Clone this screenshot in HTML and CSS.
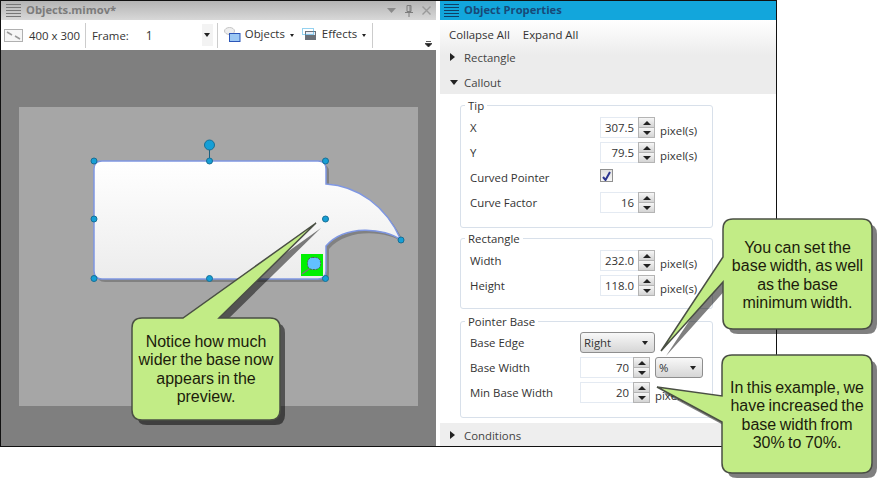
FILE: index.html
```html
<!DOCTYPE html>
<html lang="en">
<head>
    <meta charset="UTF-8">
    <meta name="viewport" content="width=device-width, initial-scale=1.0">
    <title>Object Properties</title>
    <link rel="stylesheet" href="styles.css">
</head>
<body>
    <div class="window">
        <div class="doc-panel">
            <div class="titlebar titlebar-doc">
                <svg class="grip" viewBox="0 0 15 13"><path d="M0 .5h15M0 3.5h15M0 6.500h15M0 9.500h15M0 12.500h15" stroke="#777" fill="none"/></svg>
                <span class="title-text">Objects.mimov*</span>
                <div class="title-btns">
                    <svg width="9" height="6" viewBox="0 0 9 6"><path d="M0 0h9L4.500 5z" fill="#8a8a8a"/></svg>
                    <svg width="8" height="12" viewBox="0 0 8 12"><path d="M2 .5h4v6H2zM0 7.500h8M4 8v4M5 1v5" stroke="#7c7c7c" fill="none"/></svg>
                    <svg width="9" height="9" viewBox="0 0 9 9"><path d="M.5.5l8 8M8.500.5l-8 8" stroke="#9a9a9a" stroke-width="1.400" fill="none"/></svg>
                </div>
            </div>
            <div class="toolbar">
                <svg class="tool-size" width="19" height="13" viewBox="0 0 19 13"><rect x=".5" y=".5" width="18" height="12" fill="#f6f6f6" stroke="#b0b0b0"/><path d="M3 3l5 3M11 7l5 3" stroke="#999" stroke-width="1.500"/></svg>
                <span class="tool-label size-label">400 x 300</span>
                <span class="sep"></span>
                <span class="tool-label frame-label">Frame:</span>
                <div class="frame-combo"><span>1</span><span class="combo-arrow"><i class="caret"></i></span></div>
                <span class="sep sep-b"></span>
                <svg class="tool-icon objects-icon" width="17" height="15" viewBox="0 0 17 15">
                    <ellipse cx="5.500" cy="4" rx="5" ry="3.500" fill="#eee" stroke="#c4c4c4"/>
                    <rect x="5.500" y="6.500" width="10.500" height="8" fill="#9cc8f4" stroke="#2c56b8"/>
                </svg>
                <span class="tool-label menu-label objects-label">Objects</span><i class="caret caret-tool"></i>
                <svg class="tool-icon effects-icon" width="14" height="12" viewBox="0 0 14 12">
                    <rect x="3" y="3" width="11" height="9" fill="#6b7078"/>
                    <rect x="4" y="4" width="9" height="3" fill="#e6edf8"/>
                    <rect x=".5" y=".5" width="11" height="6" fill="none" stroke="#2aa5e0" stroke-dasharray="1 1"/>
                </svg>
                <span class="tool-label menu-label effects-label">Effects</span><i class="caret caret-tool"></i>
                <span class="sep sep-c"></span>
                <svg class="overflow" width="7" height="6" viewBox="0 0 7 6"><path d="M1 .5h5M0 2.500h7L3.500 6z" stroke="#333" stroke-width=".8" fill="#222"/></svg>
            </div>
            <div class="canvas">
                <div class="stage">
                    <svg class="stage-art" width="399" height="299" viewBox="19 107 399 299">
                        <defs>
                            <linearGradient id="shapeFill" x1="0" y1="0" x2="0" y2="1">
                                <stop offset="0" stop-color="#ffffff"/>
                                <stop offset="1" stop-color="#ececec"/>
                            </linearGradient>
                        </defs>
                        <path d="M102 161H318Q326 161 326 169V184C358 186 386 206 401 240C385 228 345 224 326 246V271Q326 279 318 279H102Q94 279 94 271V169Q94 161 102 161Z" transform="translate(3 3)" fill="#000" opacity=".22"/>
                        <path d="M102 161H318Q326 161 326 169V184C358 186 386 206 401 240C385 228 345 224 326 246V271Q326 279 318 279H102Q94 279 94 271V169Q94 161 102 161Z" fill="url(#shapeFill)" stroke="#7f97e2" stroke-width="1.500"/>
                        <rect x="301" y="254" width="22" height="22" fill="#00f000"/>
                        <path d="M302 274l7-5" stroke="#777" stroke-width="1.500"/>
                        <rect x="307.500" y="257.500" width="13" height="12" rx="5" fill="#62c0ff" stroke="#555" stroke-dasharray="2 1"/>
                        <path d="M209.500 146V161" stroke="#1d5f7c"/>
                        <g fill="#169fd6" stroke="#176f95">
                            <circle cx="209.500" cy="145" r="5"/>
                            <circle cx="94" cy="161" r="3"/>
                            <circle cx="209.500" cy="161" r="3"/>
                            <circle cx="325.500" cy="161" r="3"/>
                            <circle cx="94" cy="219" r="3"/>
                            <circle cx="325.500" cy="219" r="3"/>
                            <circle cx="94" cy="278.500" r="3"/>
                            <circle cx="209.500" cy="278.500" r="3"/>
                            <circle cx="325.500" cy="278.500" r="3"/>
                            <circle cx="401" cy="240" r="3"/>
                        </g>
                    </svg>
                </div>
            </div>
        </div>
        <div class="props-panel">
            <div class="titlebar titlebar-props">
                <svg class="grip" viewBox="0 0 15 13"><path d="M0 .5h15M0 3.5h15M0 6.500h15M0 9.500h15M0 12.500h15" stroke="#0f3f66" fill="none"/></svg>
                <span class="title-text">Object Properties</span>
            </div>
            <div class="props-top">
                <div class="props-actions"><span>Collapse All</span><span>Expand All</span></div>
                <div class="section section-first"><i class="tri tri-right"></i>Rectangle</div>
                <div class="section section-open"><i class="tri tri-down"></i>Callout</div>
            </div>
            <div class="props-body">
                <fieldset class="group group-tip">
                    <legend>Tip</legend>
                    <div class="row"><label>X</label><div class="num"><span class="num-val">307.5</span><span class="spin"><b class="up"></b><b class="down"></b></span></div><span class="unit">pixel(s)</span></div>
                    <div class="row"><label>Y</label><div class="num"><span class="num-val">79.5</span><span class="spin"><b class="up"></b><b class="down"></b></span></div><span class="unit">pixel(s)</span></div>
                    <div class="row"><label>Curved Pointer</label><span class="check"><svg width="9" height="10" viewBox="0 0 9 10"><path d="M1 6l2.500 3L8 1" stroke="#2c3590" stroke-width="2" fill="none"/></svg></span></div>
                    <div class="row"><label>Curve Factor</label><div class="num"><span class="num-val">16</span><span class="spin"><b class="up"></b><b class="down"></b></span></div></div>
                </fieldset>
                <fieldset class="group group-rect">
                    <legend>Rectangle</legend>
                    <div class="row"><label>Width</label><div class="num"><span class="num-val">232.0</span><span class="spin"><b class="up"></b><b class="down"></b></span></div><span class="unit">pixel(s)</span></div>
                    <div class="row"><label>Height</label><div class="num"><span class="num-val">118.0</span><span class="spin"><b class="up"></b><b class="down"></b></span></div><span class="unit">pixel(s)</span></div>
                </fieldset>
                <fieldset class="group group-base">
                    <legend>Pointer Base</legend>
                    <div class="row"><label>Base Edge</label><div class="drop drop-wide"><span>Right</span><i class="caret"></i></div></div>
                    <div class="row"><label>Base Width</label><div class="num"><span class="num-val">70</span><span class="spin"><b class="up"></b><b class="down"></b></span></div><div class="drop drop-unit"><span>%</span><i class="caret"></i></div></div>
                    <div class="row"><label>Min Base Width</label><div class="num"><span class="num-val">20</span><span class="spin"><b class="up"></b><b class="down"></b></span></div><span class="unit">pixel(s)</span></div>
                </fieldset>
            </div>
            <div class="section section-last"><i class="tri tri-right"></i>Conditions</div>
        </div>
    </div>

    <svg class="callouts" width="887" height="488" viewBox="0 0 887 488">
        <defs>
            <path id="c1" d="M142 318H183L316 223L219 318H270Q280 318 280 328V410Q280 420 270 420H142Q132 420 132 410V328Q132 318 142 318Z"/>
            <path id="c2" d="M733 219H862Q872 219 872 229V319Q872 329 862 329H733Q723 329 723 319V282L661 351L723 257V229Q723 219 733 219Z"/>
            <path id="c3" d="M732 355H862Q872 355 872 365V463Q872 473 862 473H732Q722 473 722 463V422L657 387L722 396V365Q722 355 732 355Z"/>
        </defs>
        <g class="callout-shadow" transform="translate(5 5)"><use href="#c1"/><use href="#c2"/><use href="#c3"/></g>
        <g class="callout-shape"><use href="#c1"/><use href="#c2"/><use href="#c3"/></g>
    </svg>
    <div class="note note-a">Notice how much<br>wider the base now<br>appears in the<br>preview.</div>
    <div class="note note-b">You can set the<br>base width, as well<br>as the base<br>minimum width.</div>
    <div class="note note-c">In this example, we<br>have increased the<br>base width from<br>30% to 70%.</div>
</body>
</html>
```

FILE: styles.css
```css
html, body {
    margin: 0;
    padding: 0;
    height: 100%;
    overflow: hidden;
    background: #fff;
    font-family: "Open Sans", "Noto Sans", sans-serif;
    font-size: 11.4px;
    color: #333;
}
.window {
    display: flex;
    width: 777px;
    height: 447px;
    box-sizing: border-box;
    border: 1px solid #111;
}
.doc-panel {
    display: flex;
    flex-direction: column;
    width: 435px;
    margin-right: 4px;
}
.props-panel {
    display: flex;
    flex-direction: column;
    flex: 1;
    min-height: 0;
}
.titlebar {
    display: flex;
    align-items: center;
    height: 19px;
    flex: none;
    padding-left: 5px;
    font-weight: bold;
    font-size: 11.2px;
}
.title-text {
    margin-top: -2px;
}
.titlebar-doc {
    background: linear-gradient(#b4b4b4, #d8d8d8);
    color: #7b7b7b;
}
.titlebar-props {
    background: #12a6dc;
    color: #174a78;
    padding-left: 4px;
}
.grip {
    width: 15px;
    height: 13px;
    margin-right: 5px;
}
.title-btns {
    margin-left: auto;
    display: flex;
    align-items: center;
    gap: 9px;
    padding-right: 5px;
}
.toolbar {
    display: flex;
    align-items: center;
    height: 30px;
    flex: none;
    background: #fff;
    position: relative;
}
.tool-size {
    margin-left: 3px;
}
.tool-label {
    color: #333;
    white-space: nowrap;
}
.size-label {
    margin-left: 6px;
}
.sep {
    width: 1px;
    height: 25px;
    background: #ccc;
    margin-left: 5px;
}
.frame-label {
    margin-left: 6px;
}
.frame-combo {
    display: flex;
    align-items: center;
    justify-content: space-between;
    width: 74px;
    height: 22px;
    margin-left: 10px;
    padding-left: 7px;
    box-sizing: border-box;
    font-size: 12px;
    background: #fff;
}
.combo-arrow {
    display: flex;
    align-items: center;
    justify-content: center;
    width: 11px;
    height: 22px;
    background: #f3f3f3;
}
.caret {
    display: block;
    width: 0;
    height: 0;
    border-left: 3.500px solid transparent;
    border-right: 3.500px solid transparent;
    border-top: 4px solid #222;
}
.sep-b {
    margin-left: 4px;
}
.tool-icon {
    margin-left: 6px;
}
.objects-icon {
    margin-top: -2px;
}
.menu-label {
    margin-top: -3px;
}
.objects-label {
    margin-left: 4px;
}
.caret-tool {
    margin-left: 5px;
    border-left-width: 2.500px;
    border-right-width: 2.500px;
    border-top-width: 3px;
}
.effects-icon {
    margin-left: 8px;
    margin-top: -3px;
}
.effects-label {
    margin-left: 6px;
}
.sep-c {
    margin-left: 6px;
}
.overflow {
    position: absolute;
    right: 4px;
    bottom: 3px;
}
.canvas {
    flex: 1;
    background: #7f7f7f;
    padding: 57px 0 0 18px;
}
.stage {
    width: 399px;
    height: 299px;
    background: #a6a6a6;
}
.stage-art {
    display: block;
}
.props-top {
    background: linear-gradient(#fff, #ececec 48%, #ececec);
    flex: none;
}
.props-actions {
    display: flex;
    gap: 13px;
    height: 26px;
    align-items: center;
    padding: 3px 0 0 9px;
    box-sizing: border-box;
    color: #333;
}
.section {
    display: flex;
    align-items: center;
    height: 24px;
    padding-left: 10px;
    color: #444;
}
.section-first {
    padding-bottom: 2px;
    box-sizing: border-box;
}
.section-last {
    height: 23px;
    flex: none;
    padding-top: 1px;
    box-sizing: border-box;
    background: #eee;
}
.tri {
    display: block;
    width: 0;
    height: 0;
    margin-right: 9px;
}
.tri-right {
    border-top: 4px solid transparent;
    border-bottom: 4px solid transparent;
    border-left: 5px solid #222;
}
.tri-down {
    border-left: 4px solid transparent;
    border-right: 4px solid transparent;
    border-top: 5px solid #222;
    margin-right: 6px;
}
.props-body {
    flex: 1;
    min-height: 0;
    padding: 0 0 0 20px;
}
.group {
    width: 253px;
    box-sizing: border-box;
    margin: 0;
    padding: 0 0 0 9px;
    border: 1px solid #d8e0ea;
    border-radius: 3px;
}
.group legend {
    padding: 0 3px;
    margin-left: -5px;
    color: #333;
    line-height: 15px;
}
.group-tip {
    height: 130px;
    margin-top: 4px;
    padding-top: 2px;
}
.group-rect {
    height: 78px;
    margin-top: 3px;
    padding-top: 2px;
}
.group-base {
    height: 104px;
    margin-top: 5px;
    padding-top: 1px;
}
.row {
    display: grid;
    grid-template-columns: 130px auto auto;
    justify-content: start;
    align-items: center;
    height: 25px;
    color: #333;
}
.group-base .row {
    grid-template-columns: 110px auto auto;
}
.num {
    display: flex;
    width: 55px;
    height: 21px;
    box-sizing: border-box;
    border: 1px solid #e4eaf2;
    background: #fff;
    border-right: 0;
}
.group-base .num {
    width: 70px;
}
.num-val {
    flex: 1;
    text-align: right;
    padding-right: 4px;
    line-height: 19px;
}
.spin {
    display: flex;
    flex-direction: column;
    width: 17px;
    margin: -1px 0;
    border: 1px solid #b4b4b4;
    box-sizing: border-box;
    flex: none;
}
.spin b {
    flex: 1;
    display: flex;
    align-items: center;
    justify-content: center;
    background: linear-gradient(#f6f6f6, #d4d4d4);
}
.spin b + b {
    border-top: 1px solid #b4b4b4;
}
.spin b::after {
    content: "";
    width: 0;
    height: 0;
    border-left: 4px solid transparent;
    border-right: 4px solid transparent;
}
.spin .up::after {
    border-bottom: 4px solid #222;
}
.spin .down::after {
    border-top: 4px solid #222;
}
.unit {
    margin: 5px 0 0 5px;
    color: #333;
}
.check {
    display: flex;
    align-items: center;
    justify-content: center;
    width: 11px;
    height: 11px;
    border: 1px solid #8f8f8f;
    background: linear-gradient(#e0e0e0, #f8f8f8);
    margin-top: -4px;
}
.drop {
    display: flex;
    align-items: center;
    justify-content: space-between;
    height: 21px;
    box-sizing: border-box;
    border: 1px solid #8e8e8e;
    border-radius: 3px;
    background: linear-gradient(#f8f8f8, #d6d6d6);
    padding: 0 6px 0 3px;
}
.drop-wide {
    width: 75px;
}
.drop-unit {
    width: 48px;
    margin-left: 5px;
}
.callouts {
    position: absolute;
    top: 0;
    left: 0;
}
.callout-shadow use {
    fill: #000;
    fill-opacity: 0.5;
}
.callout-shape use {
    fill: #c2ec86;
    stroke: #4a4f44;
    stroke-width: 1.500;
}
.note {
    position: absolute;
    font-family: "Liberation Sans", Arial, sans-serif;
    font-size: 16px;
    line-height: 18.400px;
    text-align: center;
    white-space: nowrap;
    word-spacing: -1px;
    color: #1c1c0c;
}
.note-a {
    left: 132px;
    top: 333px;
    width: 148px;
}
.note-b {
    left: 723px;
    top: 239px;
    width: 149px;
}
.note-c {
    left: 722px;
    top: 379px;
    width: 150px;
}
```
